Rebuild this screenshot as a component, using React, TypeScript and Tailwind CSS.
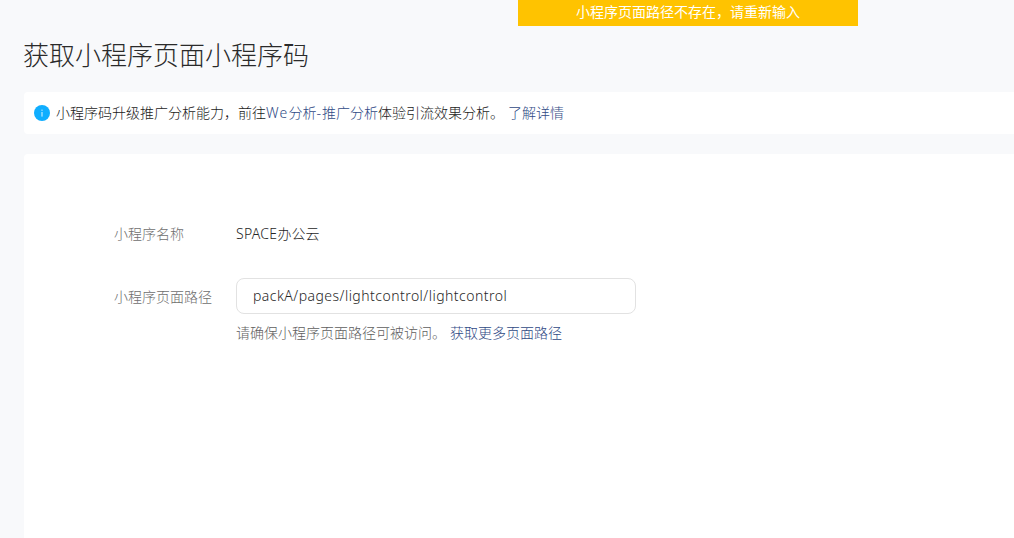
export default function App() {
  return (
    <div className="relative h-[538px] w-[1014px] overflow-hidden bg-[#f8f9fb] font-light font-['Noto_Sans','Noto_Sans_CJK_SC','Liberation_Sans',sans-serif]">
      <div className="absolute left-[518px] top-0 flex h-[26px] w-[340px] items-center justify-center bg-[#ffc300] pb-[4px] text-[14px] font-normal text-white">
        小程序页面路径不存在，请重新输入
      </div>
      <div className="flex flex-col pl-6">
        <h1 className="-ml-px flex h-[92px] items-start pt-[37px] text-[26px] leading-[36px] font-light text-[#2a2a2a]">获取小程序页面小程序码</h1>
        <div className="flex h-[42px] items-center gap-[6px] rounded-l-[4px] bg-white pl-[10px] pb-[2px] text-[14px] text-[#1a1a1a]">
          <svg width="16" height="16" viewBox="0 0 16 16" className="mt-[2px] shrink-0">
            <circle cx="8" cy="8" r="8" fill="#10aeff" />
            <rect x="7.5" y="7" width="1" height="4.6" fill="#d9f3ff" />
            <rect x="7.5" y="4.6" width="1" height="1.2" fill="#d9f3ff" />
          </svg>
          <span>
            小程序码升级推广分析能力，前往
            <span className="text-[#2f4a85]">
              <span className="tracking-[1.2px]">We</span>分析<span className="tracking-[1px]">-</span>推广分析
            </span>
            体验引流效果分析。
            <span className="ml-[4px] text-[#2f4a85]">了解详情</span>
          </span>
        </div>
        <div className="mt-5 flex h-[384px] flex-col rounded-tl-[4px] bg-white pt-[65px] pl-[90px] text-[14px]">
          <div className="flex h-[28px] items-center">
            <span className="w-[122px] text-[#6e6e6e]">小程序名称</span>
            <span className="text-[#262626]">
              <span className="tracking-[0.3px]">SPACE</span>办公云
            </span>
          </div>
          <div className="mt-[31px] flex items-start">
            <span className="flex h-[36px] w-[122px] items-center text-[#6e6e6e]">小程序页面路径</span>
            <div className="flex flex-col">
              <div className="flex h-[36px] w-[400px] items-center rounded-[8px] border border-[#e2e2e2] pl-4 pb-px tracking-[0.47px] text-[#262626]">
                packA/pages/lightcontrol/lightcontrol
              </div>
              <div className="mt-[8px] text-[#5e5e5e]">
                请确保小程序页面路径可被访问。
                <span className="ml-[4px] text-[#2f4a85]">获取更多页面路径</span>
              </div>
            </div>
          </div>
        </div>
      </div>
    </div>
  );
}
